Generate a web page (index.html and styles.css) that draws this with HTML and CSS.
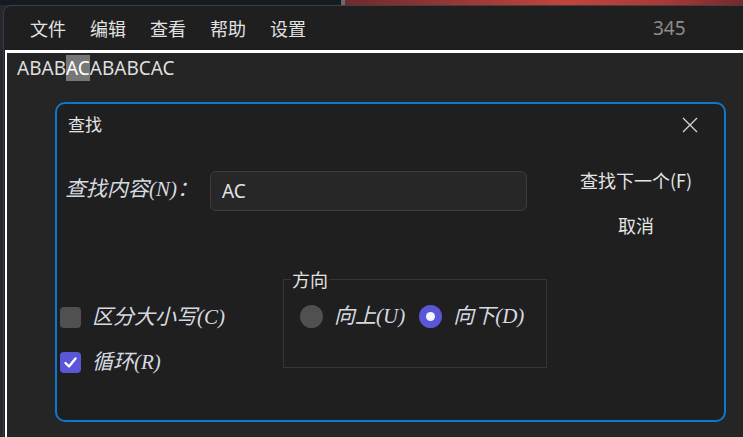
FILE: index.html
```html
<!DOCTYPE html>
<html lang="zh-CN">
<head>
<meta charset="utf-8">
<title>查找</title>
<link rel="stylesheet" href="styles.css">
</head>
<body>
<div class="topstrip">
  <div class="ts-dark"></div>
  <div class="ts-sep"></div>
  <div class="ts-red"></div>
</div>
<div class="window">
  <div class="menubar">
    <nav class="menus">
      <span class="menu">文件</span>
      <span class="menu">编辑</span>
      <span class="menu">查看</span>
      <span class="menu">帮助</span>
      <span class="menu">设置</span>
    </nav>
    <span class="counter">345</span>
  </div>
  <div class="editor">
    <div class="text">ABAB<span class="sel">AC</span>ABABCAC</div>

    <div class="dialog">
      <div class="titlebar">
        <span class="title">查找</span>
        <span class="close">
          <svg width="16" height="16" viewBox="0 0 16 16"><path d="M1 1 L15 15 M15 1 L1 15" stroke="#d8d8d8" stroke-width="1.3" fill="none"/></svg>
        </span>
      </div>
      <div class="dbody">
        <div class="leftcol">
          <div class="formrow">
            <span class="flabel">查找内容(N)：</span>
            <div class="input">AC</div>
          </div>
          <div class="bottomrow">
            <div class="options">
              <div class="opt">
                <span class="cbox"></span>
                <span class="olabel">区分大小写(C)</span>
              </div>
              <div class="opt">
                <span class="cbox checked">
                  <svg width="21" height="21" viewBox="0 0 21 21"><path d="M5.5 11 L9 14.5 L15.5 6.5" stroke="#ffffff" stroke-width="2.4" fill="none" stroke-linecap="round" stroke-linejoin="round"/></svg>
                </span>
                <span class="olabel">循环(R)</span>
              </div>
            </div>
            <fieldset class="group">
              <legend>方向</legend>
              <div class="radios">
                <span class="radio"></span>
                <span class="olabel">向上(U)</span>
                <span class="radio on"><span class="dot"></span></span>
                <span class="olabel">向下(D)</span>
              </div>
            </fieldset>
          </div>
        </div>
        <div class="rightcol">
          <div class="btn">查找下一个(F)</div>
          <div class="btn">取消</div>
        </div>
      </div>
    </div>
  </div>
</div>
</body>
</html>
```

FILE: styles.css
```css
html, body {
  margin: 0;
  padding: 0;
}
body {
  width: 743px;
  height: 437px;
  overflow: hidden;
  background: #27282e;
  font-family: "Noto Sans", "Noto Sans CJK SC", sans-serif;
  color: #dcdcdc;
}
.topstrip {
  display: flex;
  height: 5px;
}
.ts-dark {
  width: 341px;
  background: #161a22;
}
.ts-sep {
  width: 4px;
  background: #6a6a6e;
}
.ts-red {
  flex: 1;
  background: linear-gradient(90deg, #6e2a2e 0%, #a23a38 35%, #c2443c 55%, #a83a38 80%, #722a2e 100%);
}
.window {
  margin-left: 3px;
  height: 432px;
  box-sizing: border-box;
  border-top: 1px solid #3f3f44;
  border-left: 1px solid #3a3a40;
  border-top-left-radius: 8px;
  background: #1f1f1f;
  display: flex;
  flex-direction: column;
}
.menubar {
  height: 44px;
  display: flex;
  align-items: center;
  padding-left: 26px;
  flex-shrink: 0;
}
.menus {
  display: flex;
  gap: 24px;
  font-family: "Noto Sans CJK SC", sans-serif;
  font-size: 18px;
  line-height: 24px;
  color: #e2e2e2;
}
.menu {
  width: 36px;
}
.counter {
  margin-left: 347px;
  font-size: 19px;
  color: #8c8c8c;
  line-height: 24px;
}
.editor {
  flex: 1;
  position: relative;
  margin-left: 1px;
  border-top: 3px solid #ffffff;
  border-left: 2px solid #ffffff;
  background: #252525;
}
.text {
  padding: 4px 0 0 10px;
  font-size: 19px;
  line-height: 23px;
  color: #dedede;
}
.sel {
  background: #777777;
  color: #ffffff;
}
.dialog {
  position: absolute;
  left: 48px;
  top: 49px;
  width: 671px;
  height: 320px;
  box-sizing: border-box;
  border: 2px solid #0b78d2;
  border-radius: 10px;
  background: #1f1f1f;
  display: flex;
  flex-direction: column;
}
.titlebar {
  height: 42px;
  display: flex;
  align-items: center;
  justify-content: space-between;
  padding-left: 11px;
  flex-shrink: 0;
}
.title {
  font-family: "Noto Sans CJK SC", sans-serif;
  font-size: 17px;
  line-height: 22px;
  padding-bottom: 3px;
  color: #e4e4e4;
}
.close {
  width: 44px;
  height: 42px;
  margin-right: 12px;
  display: flex;
  align-items: center;
  justify-content: center;
}
.dbody {
  display: flex;
  flex: 1;
}
.leftcol {
  width: 503px;
  display: flex;
  flex-direction: column;
}
.formrow {
  margin-top: 25px;
  height: 40px;
  display: flex;
  align-items: center;
}
.flabel, .olabel {
  font-family: "Liberation Serif", "Noto Sans CJK SC", serif;
  font-style: italic;
  font-size: 21px;
  line-height: 24px;
  color: #d6dae0;
  white-space: nowrap;
}
.flabel {
  margin-left: 8px;
  width: 145px;
  padding-bottom: 4px;
}
.input {
  width: 317px;
  height: 40px;
  box-sizing: border-box;
  border: 1px solid #3d3d3d;
  border-radius: 6px;
  background: #272727;
  padding-left: 11px;
  display: flex;
  align-items: center;
  font-size: 19px;
  color: #e2e2e2;
}
.bottomrow {
  margin-top: 58px;
  display: flex;
  align-items: flex-start;
}
.options {
  width: 223px;
  padding-left: 3px;
  padding-top: 38px;
  display: flex;
  flex-direction: column;
  gap: 24px;
}
.opt {
  display: flex;
  align-items: center;
  height: 21px;
  gap: 11px;
}
.opt .olabel {
  padding-bottom: 2px;
}
.cbox {
  width: 21px;
  height: 21px;
  border-radius: 4px;
  background: #505050;
  flex-shrink: 0;
  display: flex;
}
.cbox.checked {
  background: #5b55d8;
}
.group {
  box-sizing: border-box;
  width: 264px;
  height: 99px;
  margin: 0;
  padding: 0;
  min-width: 0;
  border: 1px solid #353535;
}
.group legend {
  margin-left: 7px;
  padding: 0 1px;
  font-family: "Noto Sans CJK SC", sans-serif;
  font-size: 18px;
  line-height: 20px;
  color: #e2e2e2;
}
.radios {
  margin-top: 16px;
  padding-left: 16px;
  display: flex;
  align-items: center;
  height: 23px;
}
.radios .olabel {
  padding-bottom: 2px;
}
.radio {
  width: 23px;
  height: 23px;
  border-radius: 50%;
  background: #505050;
  margin-right: 11px;
  flex-shrink: 0;
  display: flex;
  align-items: center;
  justify-content: center;
}
.radio.on {
  background: #5b55d8;
  margin-left: 14px;
}
.dot {
  width: 9px;
  height: 9px;
  border-radius: 50%;
  background: #f4f4ff;
}
.rightcol {
  width: 152px;
  display: flex;
  flex-direction: column;
  align-items: center;
  padding-top: 16px;
  gap: 9px;
}
.btn {
  height: 36px;
  display: flex;
  align-items: center;
  font-family: "Noto Sans CJK SC", sans-serif;
  font-size: 18px;
  color: #e4e4e4;
  white-space: nowrap;
}
```
